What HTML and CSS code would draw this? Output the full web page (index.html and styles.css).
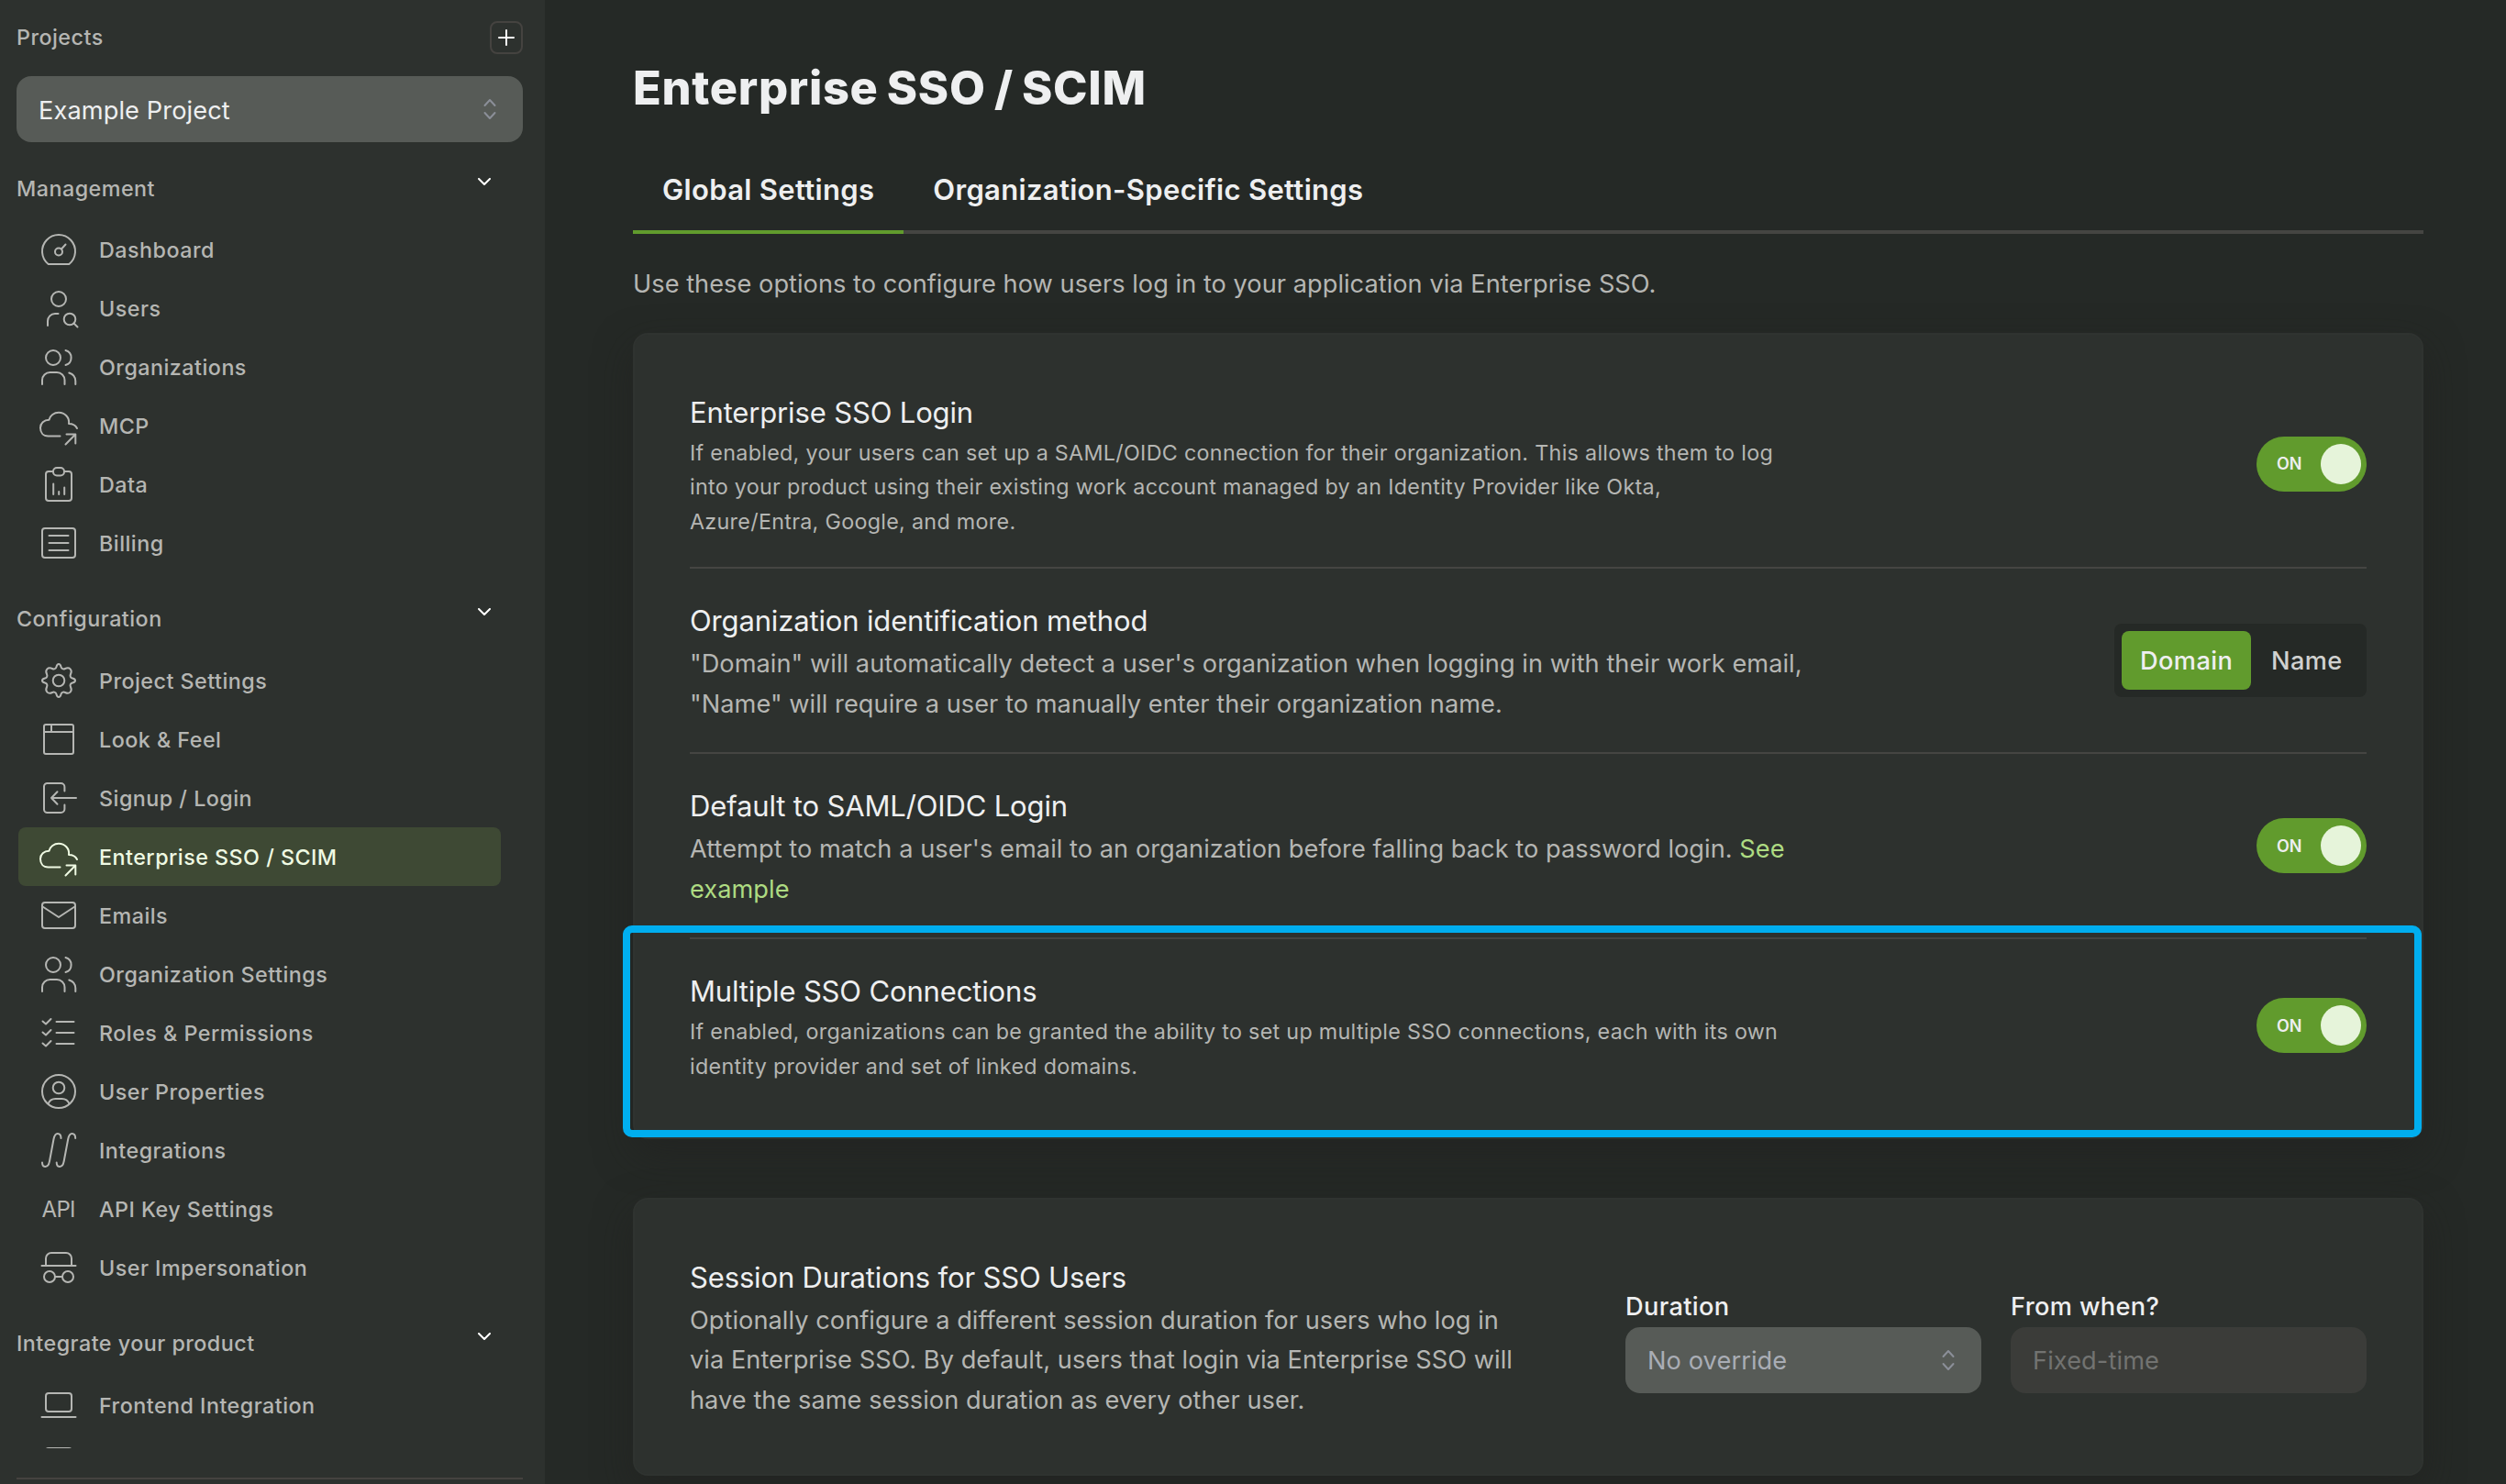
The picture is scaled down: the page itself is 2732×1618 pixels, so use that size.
FILE: index.html
```html
<!DOCTYPE html>
<html lang="en">
<head>
  <meta charset="UTF-8">
  <meta name="viewport" content="width=device-width, initial-scale=1.0">
  <title>Enterprise SSO / SCIM</title>
  <link rel="stylesheet" href="styles.css">
</head>
<body>
  <!-- Shared icons -->
  <svg class="sprite" width="0" height="0">
    <symbol id="icon-people" viewBox="0 0 44 44">
      <circle cx="16" cy="12" r="8"/>
      <path d="M29.500 4a8.300 8.300 0 0 1 0 16M4 41v-4.500a8.500 8.500 0 0 1 8.500-8.500h7.500a8.500 8.500 0 0 1 8.500 8.500V41M33.300 28.500c4.500 1.500 7 5 7 9V41"/>
    </symbol>
    <symbol id="icon-cloud" viewBox="0 0 44 44">
      <path d="M23.500 33.500H10.500C5 33.500 2 29.500 2 24.500C2 19.500 6 15.800 11.500 15.800C12.500 11 17 7.800 22 7.800C28.500 7.800 34 13 33 20C37 20 40.500 22 42 25"/>
      <path d="M29.500 42.500L40.300 31.500M30.500 31.500h9.800v10"/>
    </symbol>
    <symbol id="icon-chevron" viewBox="0 0 14 8">
      <path d="M1 1l6 6 6-6"/>
    </symbol>
    <symbol id="icon-sort" viewBox="0 0 14 24">
      <path d="M1.500 8L7 2l5.500 6M1.500 16L7 22l5.500-6"/>
    </symbol>
  </svg>

  <div class="layout">
    <aside class="sidebar">
      <div class="projects">
        <span>Projects</span>
        <button class="add"><svg viewBox="0 0 18 18"><path d="M9 1v16M1 9h16"/></svg></button>
      </div>
      <div class="select">
        <span>Example Project</span>
        <svg class="sort"><use href="#icon-sort"/></svg>
      </div>

      <nav class="nav">
        <div class="group"><span>Management</span><svg class="chevron"><use href="#icon-chevron"/></svg></div>
        <a class="item"><svg class="icon" viewBox="0 0 44 44"><path d="M10.700 38A18 18 0 1 1 33.300 38Z"/><circle cx="22" cy="24.500" r="4"/><path d="M25 21.500l4.500-5"/></svg>Dashboard</a>
        <a class="item"><svg class="icon" viewBox="0 0 44 44"><circle cx="22" cy="12" r="8"/><path d="M10 41v-5a8 8 0 0 1 8-8h3.500"/><circle cx="34" cy="34" r="6.300"/><path d="M38.500 38.500l4 4"/></svg>Users</a>
        <a class="item"><svg class="icon"><use href="#icon-people"/></svg>Organizations</a>
        <a class="item"><svg class="icon"><use href="#icon-cloud"/></svg>MCP</a>
        <a class="item"><svg class="icon" viewBox="0 0 44 44"><path d="M16 8h-5a3 3 0 0 0-3 3v26a3 3 0 0 0 3 3h22a3 3 0 0 0 3-3V11a3 3 0 0 0-3-3h-5"/><rect x="16" y="4" width="12" height="8.500" rx="4"/><path d="M16.200 21.500V33M22.200 30v3M28.200 25.500V33"/></svg>Data</a>
        <a class="item"><svg class="icon" viewBox="0 0 44 44"><rect x="4" y="6" width="36" height="32" rx="3"/><path d="M11.500 14h21M11.500 22h21M11.500 30h21"/></svg>Billing</a>

        <div class="group"><span>Configuration</span><svg class="chevron"><use href="#icon-chevron"/></svg></div>
        <a class="item"><svg class="icon" viewBox="0 0 44 44"><path d="M22 4C23.300 4 24 5 24.500 7C25 9.200 27 10 29 9C31.500 7.800 33 7.800 34.600 9.400C36.200 11 36.200 12.500 35 15C34 17 34.800 19 37 19.500C39 20 40 20.700 40 22C40 23.300 39 24 37 24.500C34.800 25 34 27 35 29C36.200 31.500 36.200 33 34.600 34.600C33 36.200 31.500 36.200 29 35C27 34 25 34.800 24.500 37C24 39 23.300 40 22 40C20.700 40 20 39 19.500 37C19 34.800 17 34 15 35C12.500 36.200 11 36.200 9.400 34.600C7.800 33 7.800 31.500 9 29C10 27 9.200 25 7 24.500C5 24 4 23.300 4 22C4 20.700 5 20 7 19.500C9.200 19 10 17 9 15C7.800 12.500 7.800 11 9.400 9.400C11 7.800 12.500 7.800 15 9C17 10 19 9.200 19.500 7C20 5 20.700 4 22 4Z"/><circle cx="22" cy="22" r="6.300"/></svg>Project Settings</a>
        <a class="item"><svg class="icon" viewBox="0 0 44 44"><rect x="6" y="6" width="32" height="32" rx="2"/><path d="M6 14h32M14 6v8"/></svg>Look &amp; Feel</a>
        <a class="item"><svg class="icon" viewBox="0 0 44 44"><path d="M28.400 14.500V10a4 4 0 0 0-4-4H9.500A3.500 3.500 0 0 0 6 9.500v25A3.500 3.500 0 0 0 9.500 38h14.900a4 4 0 0 0 4-4v-4.500M41 22H14M20.500 15.300L14 22l6.500 6.700"/></svg>Signup / Login</a>
        <a class="item active"><svg class="icon"><use href="#icon-cloud"/></svg>Enterprise SSO / SCIM</a>
        <a class="item"><svg class="icon" viewBox="0 0 44 44"><rect x="4" y="8" width="36" height="28" rx="3"/><path d="M4.500 12.500L22 24l17.500-11.500"/></svg>Emails</a>
        <a class="item"><svg class="icon"><use href="#icon-people"/></svg>Organization Settings</a>
        <a class="item"><svg class="icon" viewBox="0 0 44 44"><path d="M4.500 9.500L8 12.500L13.500 7M4.500 21.500L8 24.500L13.500 19M4.500 33.500L8 36.500L13.500 31M19.500 10h19M19.500 22h19M19.500 34h19"/></svg>Roles &amp; Permissions</a>
        <a class="item"><svg class="icon" viewBox="0 0 44 44"><circle cx="22" cy="22" r="18"/><circle cx="22" cy="18" r="6.300"/><path d="M10.500 35.500c1.500-4 4.500-5.500 8-5.500h7c3.500 0 6.500 1.500 8 5.500"/></svg>User Properties</a>
        <a class="item"><svg class="icon" viewBox="0 0 44 44"><path d="M24.500 9C24.500 5.500 23 4 20.800 4C18 4 17.200 6.500 16.500 10L12 34C11.300 38 10 40 7.500 40C5 40 4 38 4 35.500M40.200 9C40.200 5.500 38.700 4 36.500 4C33.700 4 32.900 6.500 32.200 10L27.700 34C27 38 25.700 40 23.200 40C20.700 40 19.700 38 19.700 35.500"/></svg>Integrations</a>
        <a class="item"><svg class="icon" viewBox="0 0 44 44"><text class="api" x="3.500" y="31" textLength="37">API</text></svg>API Key Settings</a>
        <a class="item"><svg class="icon" viewBox="0 0 44 44"><path d="M8 20v-8a6 6 0 0 1 6-6h16a6 6 0 0 1 6 6v8M3.500 20h37"/><circle cx="12" cy="32" r="6"/><circle cx="32" cy="32" r="6"/><path d="M18 32h8"/></svg>User Impersonation</a>

        <div class="group"><span>Integrate your product</span><svg class="chevron"><use href="#icon-chevron"/></svg></div>
        <a class="item"><svg class="icon" viewBox="0 0 44 44"><rect x="8" y="9" width="28" height="20" rx="3"/><path d="M3.500 35h37"/></svg>Frontend Integration</a>
        <a class="item"><svg class="icon" viewBox="0 0 44 44"><rect x="8" y="5" width="28" height="14" rx="3"/></svg></a>
      </nav>
      <div class="footer-line"></div>
    </aside>

    <main class="main">
      <h1>Enterprise SSO / SCIM</h1>
      <div class="tabs">
        <div class="tab active">Global Settings</div>
        <div class="tab">Organization-Specific Settings</div>
      </div>
      <p class="intro">Use these options to configure how users log in to your application via Enterprise SSO.</p>

      <div class="card">
        <section class="setting">
          <div class="info">
            <h2>Enterprise SSO Login</h2>
            <p class="small">If enabled, your users can set up a SAML/OIDC connection for their organization. This allows them to log into your product using their existing work account managed by an Identity Provider like Okta, Azure/Entra, Google, and more.</p>
          </div>
          <div class="toggle"><span>ON</span><i class="knob"></i></div>
        </section>
        <section class="setting">
          <div class="info">
            <h2>Organization identification method</h2>
            <p>"Domain" will automatically detect a user's organization when logging in with their work email, "Name" will require a user to manually enter their organization name.</p>
          </div>
          <div class="segmented">
            <span class="segment selected">Domain</span>
            <span class="segment">Name</span>
          </div>
        </section>
        <section class="setting">
          <div class="info">
            <h2>Default to SAML/OIDC Login</h2>
            <p>Attempt to match a user's email to an organization before falling back to password login. <a class="link">See</a> <a class="link">example</a></p>
          </div>
          <div class="toggle"><span>ON</span><i class="knob"></i></div>
        </section>
        <section class="setting highlighted">
          <div class="info">
            <h2>Multiple SSO Connections</h2>
            <p class="small">If enabled, organizations can be granted the ability to set up multiple SSO connections, each with its own identity provider and set of linked domains.</p>
          </div>
          <div class="toggle"><span>ON</span><i class="knob"></i></div>
        </section>
      </div>

      <div class="card">
        <section class="setting">
          <div class="info narrow">
            <h2>Session Durations for SSO Users</h2>
            <p>Optionally configure a different session duration for users who log in via Enterprise SSO. By default, users that login via Enterprise SSO will have the same session duration as every other user.</p>
          </div>
          <div class="fields">
            <div class="field">
              <label>Duration</label>
              <div class="select placeholder">
                <span>No override</span>
                <svg class="sort"><use href="#icon-sort"/></svg>
              </div>
            </div>
            <div class="field">
              <label>From when?</label>
              <div class="select disabled"><span>Fixed-time</span></div>
            </div>
          </div>
        </section>
      </div>
    </main>
  </div>
</body>
</html>
```
FILE: styles.css
```css
* {
  box-sizing: border-box;
}
body {
  margin: 0;
  font-family: Inter, "Liberation Sans", sans-serif;
  font-size: 27.2px;
  background-color: #252926;
  color: #eeeff0;
}
h1, h2, p {
  margin: 0;
}
svg {
  fill: none;
  stroke: currentColor;
  stroke-width: 2;
  stroke-linecap: round;
  stroke-linejoin: round;
}
.sprite {
  position: absolute;
}
.layout {
  display: flex;
  height: 1618px;
  overflow: hidden;
}

/* Sidebar */
.sidebar {
  display: flex;
  flex-direction: column;
  flex: 0 0 594px;
  padding: 23px 24px 5px 18px;
  background-color: #2d312e;
  color: #b5b6b3;
  font-size: 23.3px;
  font-weight: 500;
  letter-spacing: 0.48px;
}
.projects {
  display: flex;
  align-items: center;
  justify-content: space-between;
  margin-bottom: 24px;
}
.projects span {
  padding-bottom: 2px;
}
.add {
  display: flex;
  align-items: center;
  justify-content: center;
  width: 36px;
  height: 36px;
  padding: 0;
  border: 2px solid #454340;
  border-radius: 8px;
  background: none;
  color: #fff;
}
.add svg {
  width: 18px;
  height: 18px;
}
.select {
  display: flex;
  align-items: center;
  justify-content: space-between;
  flex: none;
  height: 72px;
  padding: 0 29px 0 24px;
  border-radius: 16px;
  background-color: #575b57;
  color: #eeeff0;
  font-size: 27.2px;
  font-weight: 400;
  letter-spacing: 0.1px;
}
.select span {
  padding-top: 2px;
}
.sort {
  width: 14px;
  height: 24px;
  color: #8b8f98;
}
.nav {
  flex: 1;
  min-height: 0;
  margin-bottom: 32px;
  overflow: hidden;
}
.group {
  display: flex;
  align-items: center;
  justify-content: space-between;
  height: 86px;
  padding: 14px 35px 0 0;
}
.group:first-child {
  height: 85px;
  padding-top: 16px;
}
.chevron {
  width: 14px;
  height: 8px;
  margin-bottom: 15px;
  color: #fff;
}
.item {
  display: flex;
  align-items: center;
  gap: 22px;
  width: 526px;
  height: 64px;
  margin-left: 2px;
  padding-left: 22px;
  border-radius: 8px;
}
.item.active {
  background-color: #3e4934;
  color: #effae3;
}
.icon {
  width: 44px;
  height: 44px;
}
.api {
  fill: currentColor;
  stroke: none;
  font-size: 24px;
  font-weight: 400;
  letter-spacing: 0;
}
.footer-line {
  flex: none;
  height: 2px;
  background-color: #454340;
}

/* Main */
.main {
  flex: 1;
  padding: 67px 90px 0 96px;
}
h1 {
  font-size: 50.5px;
  font-weight: 800;
  line-height: 58px;
  letter-spacing: 0.7px;
  word-spacing: -2.5px;
}
.tabs {
  display: flex;
  margin-top: 57px;
  box-shadow: inset 0 -4px #454542;
}
.tab {
  padding: 0 32px 19px;
  border-bottom: 4px solid transparent;
  font-size: 31px;
  font-weight: 600;
  line-height: 50px;
  letter-spacing: 0.32px;
}
.tab.active {
  border-bottom-color: #619b2d;
}
.intro {
  margin: 33px 0 31px;
  color: #b5b6b3;
  line-height: 44px;
  letter-spacing: 0.03px;
}
.card {
  margin-bottom: 64px;
  padding: 28px 60px;
  border: 2px solid #2f3330;
  border-radius: 16px;
  background-color: #2d312e;
  box-shadow: 0 16px 40px rgba(32, 32, 30, 0.5);
}
.setting {
  display: flex;
  align-items: center;
  justify-content: space-between;
  padding: 32px 0 31.7px;
}
.setting + .setting {
  border-top: 2px solid #454542;
}
.info {
  width: 1220px;
}
.info.narrow {
  width: 916px;
}
.info h2 {
  font-size: 31px;
  font-weight: 400;
  line-height: 49px;
  letter-spacing: -0.15px;
}
.info p {
  margin: 1px 0 -1px;
  color: #b5b6b3;
  line-height: 43.7px;
  letter-spacing: 0.04px;
}
.info .small {
  max-width: 1200px;
  font-size: 23.3px;
  line-height: 37.4px;
  letter-spacing: 0.3px;
}
.link {
  color: #aedb82;
}
.toggle {
  display: flex;
  align-items: center;
  justify-content: space-between;
  width: 120px;
  height: 60px;
  padding: 0 6px 0 22px;
  border-radius: 30px;
  background-color: #619b2d;
  font-size: 18px;
  font-weight: 600;
}
.knob {
  width: 44px;
  height: 44px;
  border-radius: 50%;
  background-color: #e6f4da;
}
.segmented {
  display: flex;
  width: 275px;
  height: 80px;
  padding: 8px;
  border-radius: 8px;
  background-color: #252926;
}
.segment {
  padding: 0 20px 0 22px;
  border-radius: 8px;
  color: #d0d1d0;
  font-weight: 500;
  line-height: 65px;
  letter-spacing: 0.4px;
}
.segment.selected {
  flex: 0 0 141px;
  padding: 0 0 0 20px;
  background-color: #619b2d;
  color: #eeeff0;
}

/* Blue marker drawn around one setting */
.highlighted {
  position: relative;
}
.highlighted::after {
  content: "";
  position: absolute;
  top: -15px;
  right: -60px;
  bottom: -28px;
  left: -73px;
  border: 8px solid #00aeef;
  border-radius: 10px;
}

.fields {
  display: flex;
  gap: 32px;
  padding-top: 4px;
}
.field {
  width: 388px;
}
.field label {
  display: block;
  padding-top: 2px;
  font-weight: 500;
  line-height: 44px;
  letter-spacing: 0.35px;
}
.select.placeholder {
  color: #a9adb5;
}
.select.disabled {
  background-color: #3b3c39;
  color: #727371;
}
```
